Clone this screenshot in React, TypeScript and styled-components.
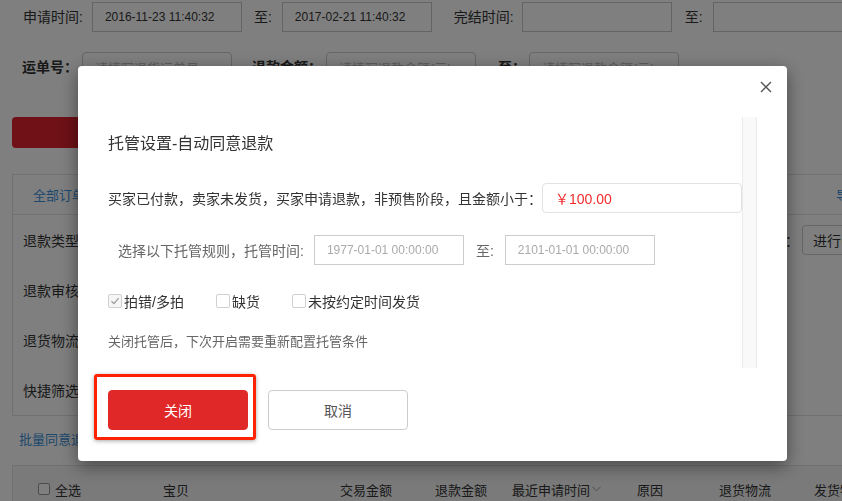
import React from "react";
import styled, { createGlobalStyle } from "styled-components";

const GlobalStyle = createGlobalStyle`
  html, body {
    margin: 0;
    padding: 0;
    width: 842px;
    height: 501px;
    overflow: hidden;
  }
  body {
    font-family: "Liberation Sans", "Noto Sans CJK SC", sans-serif;
    color: #333;
    background: #fff;
  }
  * { box-sizing: border-box; }
`;

/* ---------- background page ---------- */

const Page = styled.div`
  width: 930px;
  padding-top: 2px;
`;

const FormRow = styled.div<{ $top?: number; $left: number }>`
  display: flex;
  align-items: center;
  height: 30px;
  margin-top: ${(p) => p.$top ?? 0}px;
  padding-left: ${(p) => p.$left}px;
`;

const FieldLabel = styled.span<{ $bold?: boolean; $gap: number; $lead?: number }>`
  font-size: 14px;
  line-height: 20px;
  color: #333;
  font-weight: ${(p) => (p.$bold ? 700 : 400)};
  margin-right: ${(p) => p.$gap}px;
  margin-left: ${(p) => p.$lead ?? 0}px;
  white-space: nowrap;
`;

const DateBox = styled.div`
  width: 150px;
  height: 30px;
  border: 1px solid #c8c8c8;
  padding-left: 12px;
  display: flex;
  align-items: center;
  font-size: 12px;
  color: #333;
  flex-shrink: 0;
`;

const TextBox = styled.div`
  width: 150px;
  height: 30px;
  border: 1px solid #ccc;
  border-radius: 4px;
  padding-left: 12px;
  display: flex;
  align-items: center;
  font-size: 13px;
  color: #bbb;
  flex-shrink: 0;
  white-space: nowrap;
  overflow: hidden;
`;

const SearchButton = styled.div`
  margin: 35px 0 0 12px;
  width: 200px;
  height: 31px;
  border-radius: 4px;
  background: #de222c;
  color: #fff;
  font-size: 14px;
  display: flex;
  align-items: center;
  justify-content: center;
`;

const FilterPanel = styled.div`
  margin: 26px 0 0 12px;
  border: 1px solid #e3e3e3;
  border-right: none;
`;

const TabBar = styled.div`
  display: flex;
  align-items: center;
  height: 40px;
  padding: 0 42px 0 20px;
  border-bottom: 1px solid #e3e3e3;
`;

const Tab = styled.span<{ $end?: boolean }>`
  font-size: 13px;
  color: #3d8fd8;
  margin-left: ${(p) => (p.$end ? "auto" : "0")};
`;

const FilterRow = styled.div`
  display: flex;
  align-items: center;
  height: 50px;
  padding: 0 8px 0 10px;
`;

const FilterLabel = styled.span`
  font-size: 14px;
  color: #333;
`;

const FilterRight = styled.div`
  margin-left: auto;
  display: flex;
  align-items: center;
  font-size: 14px;
  color: #333;
`;

const SelectBox = styled.div`
  width: 120px;
  height: 30px;
  margin-left: 3px;
  border: 1px solid #ccc;
  border-radius: 4px;
  padding-left: 10px;
  display: flex;
  align-items: center;
  font-size: 14px;
  color: #333;
`;

const BatchLink = styled.div`
  margin-top: 14px;
  padding-left: 19px;
  font-size: 13px;
  line-height: 20px;
  color: #3d8fd8;
`;

const TableHead = styled.div`
  margin: 15px 0 0 12px;
  height: 48px;
  border: 1px solid #e3e3e3;
  border-right: none;
  background: #f4f4f4;
  display: flex;
  align-items: center;
`;

const HeadCell = styled.div<{ $w: number; $pad?: number }>`
  width: ${(p) => p.$w}px;
  padding-left: ${(p) => p.$pad ?? 0}px;
  flex-shrink: 0;
  display: flex;
  align-items: center;
  font-size: 13px;
  color: #333;
  white-space: nowrap;
`;

const MiniCheck = styled.span`
  width: 12px;
  height: 12px;
  border: 1px solid #999;
  border-radius: 2px;
  background: #fff;
  margin-right: 5px;
`;

const Chevron = styled.svg`
  margin-left: 2px;
`;

/* ---------- modal ---------- */

const Overlay = styled.div`
  position: fixed;
  inset: 0;
  background: rgba(0, 0, 0, 0.5);
`;

const Modal = styled.div`
  position: fixed;
  left: 78px;
  top: 66px;
  width: 709px;
  height: 395px;
  background: #fff;
  border-radius: 4px;
  box-shadow: 0 5px 18px rgba(0, 0, 0, 0.45);
  padding: 51px 30px 0 30px;
`;

const CloseButton = styled.button`
  position: absolute;
  top: 14px;
  right: 14px;
  width: 14px;
  height: 14px;
  padding: 0;
  border: none;
  background: none;
  display: flex;
  align-items: center;
  justify-content: center;
`;

const ScrollArea = styled.div`
  height: 251px;
  display: flex;
  overflow: hidden;
`;

const ScrollContent = styled.div`
  flex: 1;
  padding-top: 15px;
`;

const ScrollTrack = styled.div`
  width: 15px;
  flex-shrink: 0;
  background: #f9f9f9;
  border-left: 1px solid #ebebeb;
  border-right: 1px solid #ebebeb;
`;

const Title = styled.div`
  font-size: 16px;
  line-height: 24px;
  color: #333;
`;

const AmountRow = styled.div`
  margin-top: 27px;
  display: flex;
  align-items: center;
  height: 30px;
`;

const BodyText = styled.span`
  font-size: 14px;
  color: #333;
  white-space: nowrap;
`;

const AmountInput = styled.div`
  width: 200px;
  height: 30px;
  border: 1px solid #e2e2e2;
  border-radius: 4px;
  padding-left: 12px;
  display: flex;
  align-items: center;
  font-size: 14px;
  color: #f22c2c;
`;

const RuleRow = styled.div`
  margin-top: 22px;
  display: flex;
  align-items: center;
  height: 30px;
  padding-left: 10px;
`;

const RuleLabel = styled.span<{ $gap: number; $lead?: number }>`
  font-size: 14px;
  color: #666;
  margin-right: ${(p) => p.$gap}px;
  margin-left: ${(p) => p.$lead ?? 0}px;
  white-space: nowrap;
`;

const RuleDate = styled.div`
  width: 150px;
  height: 30px;
  border: 1px solid #ccc;
  padding-left: 12px;
  display: flex;
  align-items: center;
  font-size: 12px;
  color: #aaa;
`;

const CheckRow = styled.div`
  margin-top: 26px;
  display: flex;
  align-items: center;
  height: 20px;
  gap: 32px;
`;

const CheckItem = styled.label`
  display: flex;
  align-items: center;
  font-size: 14px;
  color: #333;
`;

const Box = styled.span<{ $checked?: boolean }>`
  width: 14px;
  height: 14px;
  border: 1px solid #d0d0d0;
  border-radius: 2px;
  background: ${(p) => (p.$checked ? "#f6f6f6" : "#fff")};
  margin-right: 2px;
  display: flex;
  align-items: center;
  justify-content: center;
`;

const Note = styled.div`
  margin-top: 21px;
  font-size: 13px;
  line-height: 20px;
  color: #666;
`;

const Footer = styled.div`
  margin-top: 22px;
  display: flex;
  gap: 20px;
`;

const Highlight = styled.div`
  position: relative;
  &::after {
    content: "";
    position: absolute;
    left: -14px;
    top: -16px;
    right: -8px;
    bottom: -10px;
    border: 3px solid #ff2200;
    border-radius: 3px;
    box-shadow: 0 1px 4px rgba(0, 0, 0, 0.35);
    pointer-events: none;
  }
`;

const ActionButton = styled.button<{ $primary?: boolean }>`
  width: 140px;
  height: 40px;
  border-radius: 4px;
  font-family: inherit;
  font-size: 14px;
  cursor: pointer;
  border: 1px solid ${(p) => (p.$primary ? "#e02828" : "#ccc")};
  background: ${(p) => (p.$primary ? "#e02828" : "#fff")};
  color: ${(p) => (p.$primary ? "#fff" : "#555")};
`;

const CheckMark = () => (
  <svg width="10" height="10" viewBox="0 0 10 10">
    <path d="M1.5 5.2 L4 7.6 L8.6 2.2" fill="none" stroke="#999" strokeWidth="1.2" />
  </svg>
);

export default function App() {
  return (
    <>
      <GlobalStyle />
      <Page>
        <FormRow $left={23}>
          <FieldLabel $gap={9}>申请时间:</FieldLabel>
          <DateBox>2016-11-23 11:40:32</DateBox>
          <FieldLabel $gap={10} $lead={12}>至:</FieldLabel>
          <DateBox>2017-02-21 11:40:32</DateBox>
          <FieldLabel $gap={8} $lead={22}>完结时间:</FieldLabel>
          <DateBox />
          <FieldLabel $gap={10} $lead={13}>至:</FieldLabel>
          <DateBox />
        </FormRow>
        <FormRow $top={20} $left={22}>
          <FieldLabel $bold $gap={4}>运单号：</FieldLabel>
          <TextBox>请填写退货运单号...</TextBox>
          <FieldLabel $bold $gap={4} $lead={20}>退款金额：</FieldLabel>
          <TextBox>请填写退款金额(元)</TextBox>
          <FieldLabel $bold $gap={3} $lead={22}>至：</FieldLabel>
          <TextBox>请填写退款金额(元)</TextBox>
        </FormRow>
        <SearchButton>搜索</SearchButton>
        <FilterPanel>
          <TabBar>
            <Tab>全部订单</Tab>
            <Tab $end>导出记录</Tab>
          </TabBar>
          <FilterRow>
            <FilterLabel>退款类型</FilterLabel>
            <FilterRight>
              退款状态：
              <SelectBox>进行中</SelectBox>
            </FilterRight>
          </FilterRow>
          <FilterRow>
            <FilterLabel>退款审核</FilterLabel>
          </FilterRow>
          <FilterRow>
            <FilterLabel>退货物流</FilterLabel>
          </FilterRow>
          <FilterRow>
            <FilterLabel>快捷筛选</FilterLabel>
          </FilterRow>
        </FilterPanel>
        <BatchLink>批量同意退款</BatchLink>
        <TableHead>
          <HeadCell $w={150} $pad={25}>
            <MiniCheck />
            全选
          </HeadCell>
          <HeadCell $w={177}>宝贝</HeadCell>
          <HeadCell $w={95}>交易金额</HeadCell>
          <HeadCell $w={77}>退款金额</HeadCell>
          <HeadCell $w={125}>
            最近申请时间
            <Chevron width="9" height="6" viewBox="0 0 9 6">
              <path d="M0.5 0.8 L4.5 4.8 L8.5 0.8" fill="none" stroke="#999" strokeWidth="1" />
            </Chevron>
          </HeadCell>
          <HeadCell $w={82}>原因</HeadCell>
          <HeadCell $w={95}>退货物流</HeadCell>
          <HeadCell $w={100}>发货物流</HeadCell>
        </TableHead>
      </Page>

      <Overlay />
      <Modal>
        <CloseButton aria-label="关闭">
          <svg width="12" height="12" viewBox="0 0 12 12">
            <path d="M1 1 L11 11 M11 1 L1 11" stroke="#555" strokeWidth="1.4" />
          </svg>
        </CloseButton>
        <ScrollArea>
          <ScrollContent>
            <Title>托管设置-自动同意退款</Title>
            <AmountRow>
              <BodyText>买家已付款，卖家未发货，买家申请退款，非预售阶段，且金额小于：</BodyText>
              <AmountInput>￥100.00</AmountInput>
            </AmountRow>
            <RuleRow>
              <RuleLabel $gap={10}>选择以下托管规则，托管时间:</RuleLabel>
              <RuleDate>1977-01-01 00:00:00</RuleDate>
              <RuleLabel $gap={11} $lead={12}>至:</RuleLabel>
              <RuleDate>2101-01-01 00:00:00</RuleDate>
            </RuleRow>
            <CheckRow>
              <CheckItem>
                <Box $checked>
                  <CheckMark />
                </Box>
                拍错/多拍
              </CheckItem>
              <CheckItem>
                <Box />
                缺货
              </CheckItem>
              <CheckItem>
                <Box />
                未按约定时间发货
              </CheckItem>
            </CheckRow>
            <Note>关闭托管后，下次开启需要重新配置托管条件</Note>
          </ScrollContent>
          <ScrollTrack />
        </ScrollArea>
        <Footer>
          <Highlight>
            <ActionButton $primary>关闭</ActionButton>
          </Highlight>
          <ActionButton>取消</ActionButton>
        </Footer>
      </Modal>
    </>
  );
}
